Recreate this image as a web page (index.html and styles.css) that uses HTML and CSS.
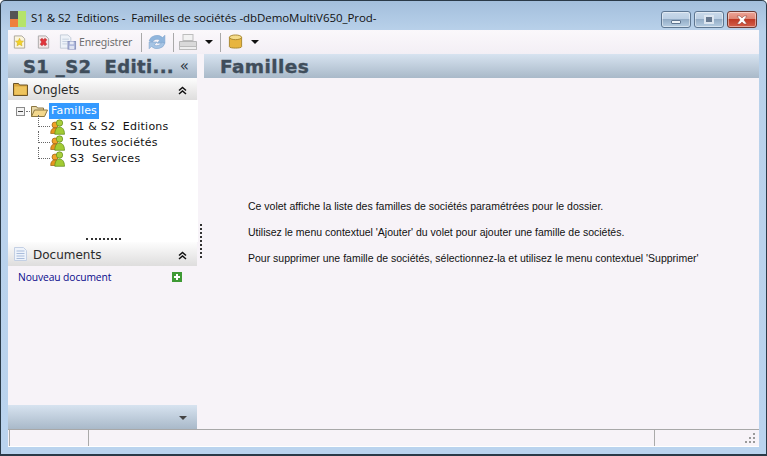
FILE: index.html
```html
<!DOCTYPE html>
<html lang="fr">
<head>
<meta charset="utf-8">
<title>Familles</title>
<link rel="stylesheet" href="styles.css">
</head>
<body>
<svg class="defs" width="0" height="0">
  <symbol id="people" viewBox="0 0 16 16">
    <circle cx="5" cy="6" r="3" fill="#f0a328" stroke="#9a5f10" stroke-width=".7"/>
    <path d="M.7 14.500c0-4 1.800-5.500 4.300-5.500s4 1.500 4 5.500z" fill="#e8961e" stroke="#9a5f10" stroke-width=".7"/>
    <circle cx="9.500" cy="4" r="3.200" fill="#a9cf3c" stroke="#5f8a18" stroke-width=".7"/>
    <path d="M4.800 15.300c0-5 2-7.300 4.700-7.300s5 2.300 5 7.300z" fill="#a2cb34" stroke="#5f8a18" stroke-width=".7"/>
  </symbol>
  <symbol id="chevrons" viewBox="0 0 9 9">
    <path d="M1 4.500l3.500-3 3.500 3M1 8l3.500-3 3.500 3" fill="none" stroke="#111" stroke-width="1.500"/>
  </symbol>
</svg>
<div class="window">
  <header class="titlebar">
    <svg class="app-icon" width="16" height="16" viewBox="0 0 16 16"><rect width="8" height="8" fill="#555"/><rect y="8" width="8" height="8" fill="#ee7f3e"/><rect x="8" width="8" height="16" fill="#b5e36a"/></svg>
    <span class="title">S1 &amp; S2&nbsp; Editions -&nbsp; Familles de sociétés -dbDemoMultiV650_Prod-</span>
    <div class="caption">
      <span class="cap-btn"><i class="glyph-min"></i></span>
      <span class="cap-btn"><i class="glyph-max"></i></span>
      <span class="cap-btn close"><svg width="14" height="10" viewBox="0 0 14 10"><path d="M2 1h3l2 2 2-2h3L9 5l3 4H9L7 7 5 9H2l3-4z" fill="#fff" stroke="#8a3b30" stroke-width=".5"/></svg></span>
    </div>
  </header>
  <div class="toolbar">
    <span class="tool"><svg width="15" height="16" viewBox="0 0 16 16"><path d="M2.500 1.500h8l3 3v10h-11z" fill="#fbf5dc" stroke="#aaa49a"/><path d="M8 4l1.300 2.800 3 .3-2.200 2 .6 3L8 10.600 5.300 12.100l.6-3-2.200-2 3-.3z" fill="#f2d227" stroke="#c9a21a" stroke-width=".5"/></svg></span>
    <span class="tool gap-x"><svg width="15" height="16" viewBox="0 0 16 16"><path d="M2.500 1.500h8l3 3v10h-11z" fill="#f4e6e6" stroke="#aaa"/><path d="M4.500 5.500l2-1.500L8 5.500 9.500 4l2 1.500L10 8l1.500 2.500-2 1.500L8 10.500 6.500 12l-2-1.500L6 8z" fill="#e0353a" stroke="#a82328" stroke-width=".5"/></svg></span>
    <span class="tool save"><svg width="18" height="18" viewBox="0 0 19 18"><path d="M1.500 1.500h8l3 3v11h-11z" fill="#eef2f8" stroke="#c3cbd8"/><path d="M3.500 6h7M3.500 8.500h7M3.500 11h5" stroke="#c5d0e0"/><rect x="9.500" y="8.500" width="8" height="8" fill="#a9b2d8" stroke="#8a93bd"/><rect x="11.500" y="8.500" width="4" height="3" fill="#e7eaf5"/><rect x="11" y="13" width="5" height="3.500" fill="#dfe3f1"/></svg><span class="save-label">Enregistrer</span></span>
    <span class="sep sep-save"></span>
    <span class="tool"><svg width="18" height="18" viewBox="2 1 16 16"><path d="M3 8a7 6 0 0 1 12-3l2-2v7h-7l2.500-2.500A4 3.500 0 0 0 6 9z" fill="#8fb5dc" stroke="#7da3cc" stroke-width=".5"/><path d="M17 10a7 6 0 0 1-12 3l-2 2V9h7l-2.500 2.500A4 3.500 0 0 0 14 9z" fill="#a6c4e4" stroke="#7da3cc" stroke-width=".5"/></svg></span>
    <span class="sep sep-near"></span>
    <span class="tool"><svg width="20" height="18" viewBox="0 0 20 18"><rect x="5" y="1.500" width="10" height="6" fill="#f2f2f2" stroke="#bdbdbd"/><path d="M1.500 8.500h17v5h-17z" fill="#d9d9d9" stroke="#b5b5b5"/><rect x="1.500" y="13.500" width="17" height="3" fill="#eee" stroke="#bbb"/></svg></span>
    <span class="drop"></span>
    <span class="sep sep-after-drop"></span>
    <span class="tool"><svg width="15" height="18" viewBox="0 0 16 18"><path d="M1.500 4v10c0 2 13 2 13 0V4z" fill="#e7b53f" stroke="#a8862f"/><ellipse cx="8" cy="4" rx="6.500" ry="2.500" fill="#f5dc8a" stroke="#a8862f"/></svg></span>
    <span class="drop drop-db"></span>
  </div>
  <div class="main">
    <aside class="left">
      <div class="band left-band"><span class="band-title">S1 _S2&nbsp; Editi...</span><span class="collapse">«</span></div>
      <div class="sec-head">
        <svg width="15" height="14" viewBox="0 0 15 14"><path d="M.5 1.500h5l1 1.500h8v10.500H.5z" fill="#d9a63f" stroke="#6b5428"/><rect x="1.500" y="4.500" width="12" height="8" fill="#eec45e"/></svg>
        <span class="sec-label">Onglets</span>
        <svg class="chev" width="9" height="9"><use href="#chevrons"/></svg>
      </div>
      <div class="tree">
        <div class="tree-root">
          <span class="minus"></span><span class="dash"></span>
          <svg width="17" height="14" viewBox="0 0 17 14"><path d="M.5 12.500V2.500h5l1 1.500h6v2" fill="#e8d8a8" stroke="#8c7742"/><path d="M.5 12.500l3-6.500h13l-3 6.500z" fill="#f3d88d" stroke="#8c7742"/></svg>
          <span class="selected">Familles</span>
        </div>
        <ul class="tree-list">
          <li><span class="branch"></span><svg class="people" width="16" height="16"><use href="#people"/></svg><span>S1 &amp; S2&nbsp; Editions</span></li>
          <li><span class="branch"></span><svg class="people" width="16" height="16"><use href="#people"/></svg><span>Toutes sociétés</span></li>
          <li><span class="branch"></span><svg class="people" width="16" height="16"><use href="#people"/></svg><span>S3&nbsp; Services</span></li>
        </ul>
        <span class="grip"></span>
      </div>
      <div class="sec-head docs">
        <svg width="15" height="16" viewBox="0 0 15 16"><path d="M1.500 1.500h9l3 3v10h-12z" fill="#eef3fb" stroke="#c4d0e4"/><path d="M3.500 5h8M3.500 7.500h8M3.500 10h8M3.500 12.500h8" stroke="#a9bcdb"/></svg>
        <span class="sec-label">Documents</span>
        <svg class="chev" width="9" height="9"><use href="#chevrons"/></svg>
      </div>
      <div class="docs-body">
        <span class="doc-link">Nouveau document</span>
        <svg class="plus" width="10" height="10" viewBox="0 0 10 10"><rect width="10" height="10" fill="#3f9a35"/><path d="M5 2v6M2 5h6" stroke="#fff" stroke-width="2"/></svg>
      </div>
      <div class="left-foot"><span class="foot-arrow"></span></div>
    </aside>
    <div class="splitter"><span class="split-dots"></span></div>
    <section class="content">
      <div class="band content-band"><span class="band-title">Familles</span></div>
      <div class="message">
        <p>Ce volet affiche la liste des familles de sociétés paramétrées pour le dossier.</p>
        <p>Utilisez le menu contextuel 'Ajouter' du volet pour ajouter une famille de sociétés.</p>
        <p>Pour supprimer une famille de sociétés, sélectionnez-la et utilisez le menu contextuel 'Supprimer'</p>
      </div>
    </section>
  </div>
  <footer class="status">
    <span class="cell cell-a"></span>
    <span class="cell cell-b"></span>
    <span class="cell cell-c"><svg class="resize" width="11" height="11" viewBox="0 0 11 11"><path d="M8 0h2v2H8zM4 4h2v2H4zM8 4h2v2H8zM0 8h2v2H0zM4 8h2v2H4zM8 8h2v2H8z" fill="#9a9a9a"/></svg></span>
  </footer>
</div>
</body>
</html>
```
FILE: styles.css
```css
* { box-sizing: border-box; }
html, body { margin: 0; padding: 0; }
body { width: 767px; height: 456px; overflow: hidden; background: #fff; }
.defs { display: block; height: 0; }

.window {
  width: 767px;
  height: 456px;
  display: flex;
  flex-direction: column;
  padding: 0 7px 7px;
  background: linear-gradient(#a3bfdc 0, #b9d1ea 30px, #bad3ee 100%);
  border: 1px solid #2a3a48;
  border-bottom-width: 2px;
  border-radius: 5px 5px 0 0;
  font-family: "Liberation Sans", sans-serif;
  color: #000;
}

.titlebar {
  height: 29px;
  flex: none;
  display: flex;
  align-items: center;
}
.app-icon { margin: 7px 0 0 2px; }
.title {
  margin: 4px 0 0 5px;
  font: 11.5px "Open Sans", sans-serif;
  letter-spacing: -.06px;
  white-space: nowrap;
  color: #111;
}
.caption {
  margin: 8px 0 0 auto;
  padding-right: 2px;
  display: flex;
  gap: 3px;
}
.cap-btn {
  width: 30px;
  height: 17px;
  border: 1px solid #5d7691;
  border-radius: 3px;
  background: linear-gradient(#c9d9ea 0, #bccfe3 45%, #93acc6 50%, #b6cde2 100%);
  display: flex;
  align-items: center;
  justify-content: center;
  box-shadow: inset 0 0 0 1px rgba(255,255,255,.45);
}
.cap-btn.close {
  background: linear-gradient(#eea597 0, #de8675 45%, #bf3a25 50%, #d4604b 100%);
  border-color: #6d3a33;
}
.glyph-min {
  width: 10px; height: 4px; margin-top: 5px;
  background: #eef3f8; border: 1px solid #5f7590; border-radius: 1px;
}
.glyph-max { width: 10px; height: 9px; background: #66788f; border: 2px solid #dde6f0; }

.toolbar {
  height: 24px;
  flex: none;
  display: flex;
  align-items: center;
  padding-left: 4px;
  background: linear-gradient(#fbf8fb, #f3eff5);
}
.tool { display: flex; align-items: center; }
.gap-x { margin-left: 9px; }
.save { margin-left: 8px; }
.save-label {
  margin-left: 2px;
  font: 10.5px "Noto Sans", sans-serif;
  color: #6f6f6f;
  letter-spacing: -.15px;
}
.sep { width: 1px; height: 19px; background: #a9a9a9; }
.sep-save { margin: 0 6px 0 9px; }
.sep-near { margin: 0 4px 0 7px; }
.sep-after-drop { margin: 0 7px 0 7px; }
.drop {
  width: 0; height: 0;
  margin-left: 7px;
  border-left: 4px solid transparent;
  border-right: 4px solid transparent;
  border-top: 4px solid #111;
}
.drop-db { margin-left: 8px; }

.main { flex: 1; min-height: 0; display: flex; background: #f7f3f8; }
.left { width: 189px; flex: none; display: flex; flex-direction: column; }
.splitter { width: 7px; flex: none; display: flex; align-items: flex-start; }
.split-dots {
  margin: 170px 0 0 3px;
  width: 2px;
  height: 34px;
  border-left: 2px dotted #333;
}
.content { flex: 1; min-width: 0; display: flex; flex-direction: column; }

.band {
  height: 24px;
  flex: none;
  display: flex;
  align-items: center;
  background: linear-gradient(#d7e3f0, #a9b9c9);
}
.band-title {
  font: bold 18.5px "DejaVu Sans", sans-serif;
  -webkit-text-stroke: .4px #3f4d5b;
  letter-spacing: .4px;
  color: #3f4d5b;
  white-space: nowrap;
}
.left-band { padding-left: 15px; justify-content: space-between; padding-right: 8px; }
.left-band .band-title { letter-spacing: .35px; font-size: 18px; }
.collapse {
  font: 15px/20px "DejaVu Sans", sans-serif;
  color: #2c3440;
}
.content-band { padding-left: 16px; }

.sec-head {
  height: 22px;
  flex: none;
  display: flex;
  align-items: center;
  padding: 0 10px 0 5px;
  background: linear-gradient(#fdfdfd, #dedddd);
}
.sec-label {
  margin: 1px 0 0 5px;
  font: 12px "DejaVu Sans", sans-serif;
  color: #2a2a2a;
}
.chev { margin: 2px 0 0 auto; }
.docs { height: 24px; }

.tree {
  height: 142px;
  flex: none;
  margin-right: -1px;
  background: #fff;
  position: relative;
  padding: 3px 0 0 8px;
}
.tree-root { display: flex; align-items: center; height: 16px; }
.minus {
  width: 9px; height: 9px;
  border: 1px solid #8a8a8a;
  background: linear-gradient(90deg, transparent 1px, #444 1px, #444 6px, transparent 6px) center / 100% 1px no-repeat #f4f4f4;
}
.dash { width: 4px; margin: 0 1px; border-top: 1px dotted #777; }
.selected {
  margin-left: 1px;
  padding: 0 2px;
  font: 11px/16px "DejaVu Sans", sans-serif;
  letter-spacing: .2px;
  background: #3399ff;
  color: #fff;
}
.tree-list { list-style: none; margin: 0; padding: 0 0 0 23px; }
.tree-list li {
  position: relative;
  display: flex;
  align-items: center;
  height: 16px;
  font: 11px/16px "DejaVu Sans", sans-serif;
  letter-spacing: .25px;
  color: #111;
  white-space: pre;
}
.branch {
  position: absolute;
  left: -1px; top: -4px;
  width: 12px; height: 12px;
  border-left: 1px dotted #666;
  border-bottom: 1px dotted #666;
}
.people { margin: 0 4px 0 11px; flex: none; }
.grip {
  position: absolute;
  left: 78px;
  bottom: 2px;
  width: 35px;
  border-top: 2px dotted #333;
}

.docs-body {
  flex: 1;
  display: flex;
  align-items: flex-start;
  justify-content: space-between;
  padding: 4px 15px 0 10px;
}
.doc-link { font: 10.3px/14px "Open Sans", sans-serif; color: #0a0a8c; letter-spacing: -.1px; }
.plus { margin-top: 2px; }
.left-foot {
  height: 24px;
  flex: none;
  position: relative;
  background: linear-gradient(#d7e3f0, #a9b9c9);
}
.foot-arrow {
  position: absolute;
  right: 10px;
  top: 11px;
  border-left: 4px solid transparent;
  border-right: 4px solid transparent;
  border-top: 4px solid #444;
}

.message { padding-top: 120px; padding-left: 44px; }
.message p {
  margin: 0 0 10px;
  font: 10.5px/16px "Liberation Sans", sans-serif;
  color: #111;
  white-space: nowrap;
}

.status {
  height: 18px;
  flex: none;
  display: flex;
  background: #f7f3f8;
  border-top: 1px solid #a8a8a8;
  border-bottom: 1px solid #fff;
}
.cell { display: block; height: 100%; position: relative; }
.cell-a { width: 80px; margin-left: 1px; border-left: 1px solid #aaa; border-right: 1px solid #aaa; }
.cell-b { width: 565px; }
.cell-c { flex: 1; border-left: 1px solid #aaa; }
.resize { position: absolute; right: 3px; bottom: 2px; }
```
